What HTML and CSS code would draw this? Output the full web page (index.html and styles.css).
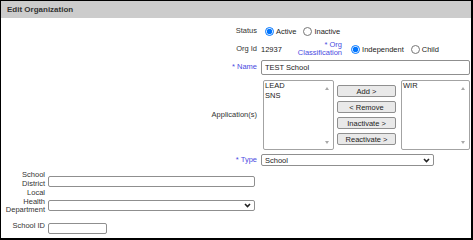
FILE: index.html
```html
<html lang="en">
<head>
  <meta charset="UTF-8">
  <title>Edit Organization</title>
  <link rel="stylesheet" href="styles.css">
</head>
<body>
  <div class="panel">
    <div class="panel-title">Edit Organization</div>

    <div class="form-top">
      <div class="label">Status</div>
      <div class="field radios">
        <label class="radio"><input type="radio" name="status" checked>Active</label>
        <label class="radio"><input type="radio" name="status">Inactive</label>
      </div>

      <div class="label">Org Id</div>
      <div class="field radios">
        <span class="org-id">12937</span>
        <span class="label req class-label">* Org<br>Classification</span>
        <label class="radio"><input type="radio" name="cls" checked>Independent</label>
        <label class="radio"><input type="radio" name="cls">Child</label>
      </div>

      <div class="label req">* Name</div>
      <div class="field">
        <input class="text name-input" type="text" value="TEST School">
      </div>

      <div class="label apps-label">Application(s)</div>
      <div class="field apps">
        <div class="listbox left-list">
          <div class="list-items">
            <div>LEAD</div>
            <div>SNS</div>
          </div>
          <div class="scroll">
            <span class="arrow up"></span>
            <span class="arrow down"></span>
          </div>
        </div>
        <div class="app-buttons">
          <button>Add &gt;</button>
          <button>&lt; Remove</button>
          <button>Inactivate &gt;</button>
          <button>Reactivate &gt;</button>
        </div>
        <div class="listbox right-list">
          <div class="list-items">
            <div>WIR</div>
          </div>
          <div class="scroll">
            <span class="arrow up"></span>
            <span class="arrow down"></span>
          </div>
        </div>
      </div>

      <div class="label req">* Type</div>
      <div class="field">
        <div class="select type-select">
          <span>School</span>
          <svg width="7" height="5" viewBox="0 0 7 5"><path d="M1 1 L3.5 3.5 L6 1" fill="none" stroke="#222" stroke-width="1.6"/></svg>
        </div>
      </div>
    </div>

    <div class="form-bottom">
      <div class="label district-label">School<br>District</div>
      <div class="field">
        <input class="text wide district-input" type="text">
      </div>

      <div class="label health-label">Local<br>Health<br>Department</div>
      <div class="field">
        <div class="select wide health-select">
          <span></span>
          <svg width="7" height="5" viewBox="0 0 7 5"><path d="M1 1 L3.5 3.5 L6 1" fill="none" stroke="#222" stroke-width="1.6"/></svg>
        </div>
      </div>

      <div class="label schoolid-label">School ID</div>
      <div class="field">
        <input class="text short schoolid-input" type="text">
      </div>
    </div>
  </div>
</body>
</html>
```

FILE: styles.css
```css
body {
  margin: 0;
  font-family: 'Liberation Sans', Arial, sans-serif;
  font-size: 7.5px;
  color: #222;
}

.panel {
  width: 473px;
  height: 240px;
  box-sizing: border-box;
  border-style: solid;
  border-color: #000;
  border-width: 1px 2px 2px 1px;
  background: #fff;
}

.panel-title {
  height: 17px;
  line-height: 17px;
  padding-left: 6px;
  background: #cccccc;
  color: #333;
  font-size: 8px;
  font-weight: bold;
}

.label {
  text-align: right;
  color: #333;
  line-height: 8.5px;
}

.req {
  color: #4b4bdf;
}

/* top block */
.form-top {
  display: grid;
  grid-template-columns: 256px 209px;
  grid-template-rows: 16px 20px 17px auto 20px;
  column-gap: 4px;
  align-items: center;
  padding-top: 5px;
}

.radios {
  display: flex;
  align-items: center;
}

.radio {
  display: flex;
  align-items: center;
  margin-right: 3px;
}

.radio input {
  width: 9px;
  height: 9px;
  margin: 0 2px 0 4px;
}

.org-id {
  color: #222;
}

.class-label {
  margin-left: 16px;
  margin-right: 5px;
}

.text {
  box-sizing: border-box;
  border: 1px solid #8f8f8f;
  border-radius: 2px;
  padding: 0 3px;
  font-family: inherit;
  font-size: 7.5px;
  color: #222;
  outline: none;
}

.name-input {
  display: block;
  width: 209px;
  height: 15px;
}

.apps-label {
  padding-top: 4px;
}

.apps {
  display: flex;
  height: 70px;
  margin-top: 4px;
}

.listbox {
  box-sizing: border-box;
  height: 70px;
  display: flex;
  border: 1px solid #a3a3a3;
  border-radius: 2px;
}

.left-list {
  width: 71px;
  margin-left: 2px;
}

.right-list {
  width: 69px;
  margin-left: 5px;
}

.list-items {
  flex: 1;
  padding-left: 1px;
  line-height: 9.5px;
  color: #222;
}

.scroll {
  width: 13px;
  display: flex;
  flex-direction: column;
  justify-content: space-between;
  align-items: center;
  padding: 6px 0 5px;
}

.arrow {
  width: 0;
  height: 0;
  border-left: 2.5px solid transparent;
  border-right: 2.5px solid transparent;
}

.arrow.up {
  border-bottom: 3px solid #a8a8a8;
}

.arrow.down {
  border-top: 3px solid #a8a8a8;
}

.app-buttons {
  display: flex;
  flex-direction: column;
  justify-content: center;
  gap: 4px;
  margin-left: 3px;
}

.app-buttons button {
  width: 59px;
  height: 12px;
  padding: 0;
  background: #e9e9e9;
  border: 1px solid #8f8f8f;
  border-radius: 2px;
  font-family: inherit;
  font-size: 7.5px;
  color: #222;
}

.select {
  box-sizing: border-box;
  display: flex;
  align-items: center;
  justify-content: space-between;
  border: 1px solid #8f8f8f;
  border-radius: 2px;
  padding: 0 3px 0 3px;
  color: #222;
}

.type-select {
  width: 173px;
  height: 12px;
}

/* bottom block */
.form-bottom {
  display: grid;
  grid-template-columns: 44px 207px;
  column-gap: 3px;
  align-items: start;
}

.wide {
  width: 207px;
  height: 11px;
}

.short {
  width: 59px;
  height: 11px;
}

.district-label {
  margin-top: 1px;
}

.district-input {
  display: block;
  margin-top: 6px;
}

.health-label {
  margin-top: 1px;
}

.health-select {
  margin-top: 12px;
}

.schoolid-label {
  margin-top: 7px;
}

.schoolid-input {
  display: block;
  margin-top: 8px;
}
```
